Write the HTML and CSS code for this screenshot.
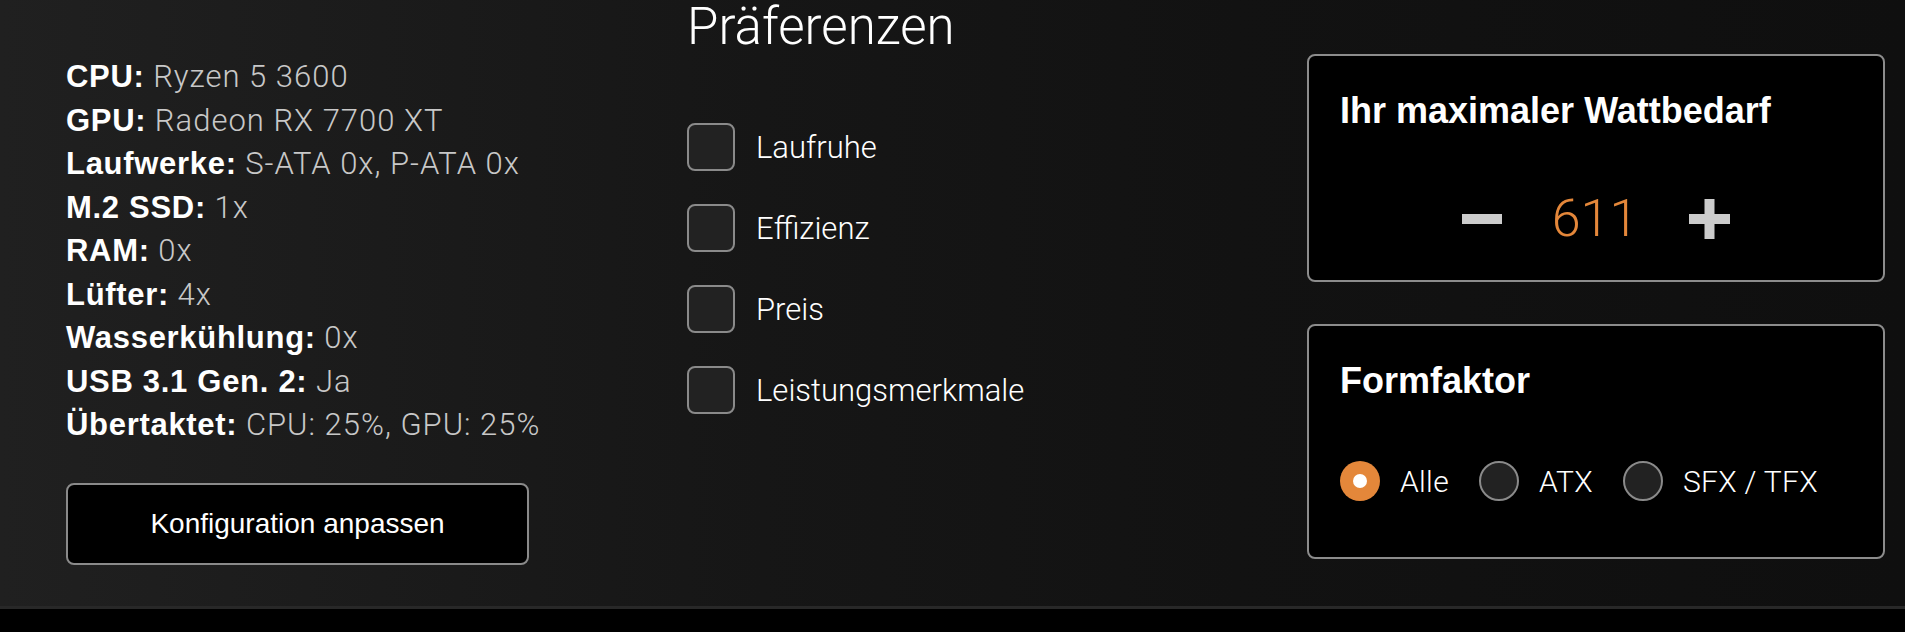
FILE: index.html
```html
<!DOCTYPE html>
<html lang="de">
<head>
<meta charset="utf-8">
<title>Netzteil-Konfigurator</title>
<link rel="stylesheet" href="styles.css">
</head>
<body>
<main class="configurator">
  <section class="summary">
    <ul class="specs">
      <li><b>CPU:</b> Ryzen 5 3600</li>
      <li><b>GPU:</b> Radeon RX 7700 XT</li>
      <li><b>Laufwerke:</b> S-ATA 0x, P-ATA 0x</li>
      <li><b>M.2 SSD:</b> 1x</li>
      <li><b>RAM:</b> 0x</li>
      <li><b>Lüfter:</b> 4x</li>
      <li><b>Wasserkühlung:</b> 0x</li>
      <li><b>USB 3.1 Gen. 2:</b> Ja</li>
      <li><b>Übertaktet:</b> CPU: 25%, GPU: 25%</li>
    </ul>
    <button class="btn-adjust" type="button">Konfiguration anpassen</button>
  </section>

  <section class="prefs">
    <h2 class="prefs-title">Präferenzen</h2>
    <ul class="checks">
      <li class="check"><span class="box"></span><span class="check-label">Laufruhe</span></li>
      <li class="check"><span class="box"></span><span class="check-label">Effizienz</span></li>
      <li class="check"><span class="box"></span><span class="check-label">Preis</span></li>
      <li class="check"><span class="box"></span><span class="check-label">Leistungsmerkmale</span></li>
    </ul>
  </section>

  <section class="side">
    <div class="card card-watt">
      <h3 class="card-title">Ihr maximaler Wattbedarf</h3>
      <div class="stepper">
        <svg class="step-btn step-minus" width="40" height="40" viewBox="0 0 40 40" aria-label="weniger"><rect x="0" y="15" width="40" height="10" fill="#cccccc"/></svg>
        <span class="watt-value">611</span>
        <svg class="step-btn step-plus" width="41" height="40" viewBox="0 0 41 40" aria-label="mehr"><rect x="0" y="15" width="41" height="10" fill="#cccccc"/><rect x="15.5" y="0" width="10" height="40" fill="#cccccc"/></svg>
      </div>
    </div>
    <div class="card card-form">
      <h3 class="card-title">Formfaktor</h3>
      <div class="radios">
        <label class="radio"><span class="dot dot-on"></span><span class="radio-label">Alle</span></label>
        <label class="radio"><span class="dot"></span><span class="radio-label">ATX</span></label>
        <label class="radio"><span class="dot"></span><span class="radio-label">SFX / TFX</span></label>
      </div>
    </div>
  </section>
</main>
</body>
</html>
```
FILE: styles.css
```css
html, body {
  margin: 0;
  padding: 0;
  background: #000;
}

body {
  font-family: Roboto, "Liberation Sans", sans-serif;
  color: #fff;
}

.configurator {
  display: grid;
  grid-template-columns: 621px 620px 578px;
  padding: 0 20px 0 66px;
  height: 606px;
  border-bottom: 3px solid #282828;
  background: linear-gradient(90deg, #202020 0%, #1b1b1b 20%, #161616 40%, #121212 65%, #0f0f0f 100%);
}

/* left column */
.summary {
  padding-top: 55px;
}

.specs {
  list-style: none;
  margin: 0;
  padding: 0;
  font-size: 31px;
  line-height: 43.5px;
  font-weight: 300;
  letter-spacing: 1px;
  color: #c8c8c8;
}

.specs b {
  font-family: "Liberation Sans", Arial, sans-serif;
  font-weight: 700;
  letter-spacing: 0.7px;
  color: #fff;
}

.btn-adjust {
  display: block;
  margin-top: 36px;
  width: 463px;
  height: 82px;
  background: #000;
  color: #fff;
  border: 2px solid #8a8a8a;
  border-radius: 8px;
  font-family: "Liberation Sans", Arial, sans-serif;
  font-size: 28px;
  padding: 0;
}

/* middle column */
.prefs {
  padding-top: 1px;
}

.prefs-title {
  margin: 0;
  font-size: 51px;
  line-height: 51px;
  font-weight: 300;
  color: #fff;
}

.checks {
  list-style: none;
  margin: 71px 0 0;
  padding: 0;
  display: flex;
  flex-direction: column;
  gap: 33px;
}

.check {
  display: flex;
  align-items: center;
  height: 48px;
}

.box {
  width: 48px;
  height: 48px;
  box-sizing: border-box;
  border: 2px solid #8a8a8a;
  border-radius: 8px;
  background: #222;
  flex: none;
}

.check-label {
  margin-left: 21px;
  font-size: 31px;
  font-weight: 300;
  color: #fff;
}

/* right column */
.side {
  padding-top: 54px;
  display: flex;
  flex-direction: column;
  gap: 42px;
}

.card {
  box-sizing: border-box;
  border: 2px solid #8c8c8c;
  border-radius: 8px;
  background: #000;
  padding: 33px 31px 0;
}

.card-watt {
  height: 228px;
}

.card-form {
  height: 235px;
}

.card-title {
  margin: 0;
  font-family: "Liberation Sans", Arial, sans-serif;
  font-weight: 700;
  font-size: 36px;
  line-height: 43px;
  color: #fff;
}

.stepper {
  margin-top: 61px;
  display: flex;
  align-items: center;
  justify-content: center;
}

.step-btn {
  display: block;
  flex: none;
}

.step-minus {
  margin-right: 50px;
}

.step-plus {
  margin-left: 51px;
}

.watt-value {
  font-size: 52px;
  line-height: 52px;
  font-weight: 300;
  color: #e4873a;
}

.radios {
  margin-top: 59px;
  display: flex;
  align-items: center;
}

.radio {
  display: flex;
  align-items: center;
  margin-right: 30px;
}

.dot {
  width: 40px;
  height: 40px;
  box-sizing: border-box;
  border-radius: 50%;
  border: 2px solid #8a8a8a;
  background: #222;
  flex: none;
  position: relative;
}

.dot-on {
  border: none;
  background: #e4873a;
}

.dot-on::after {
  content: "";
  position: absolute;
  left: 13px;
  top: 13px;
  width: 14px;
  height: 14px;
  border-radius: 50%;
  background: #fff;
}

.radio-label {
  margin-left: 20px;
  font-size: 30px;
  font-weight: 300;
  letter-spacing: 0.3px;
  color: #fff;
}
```
